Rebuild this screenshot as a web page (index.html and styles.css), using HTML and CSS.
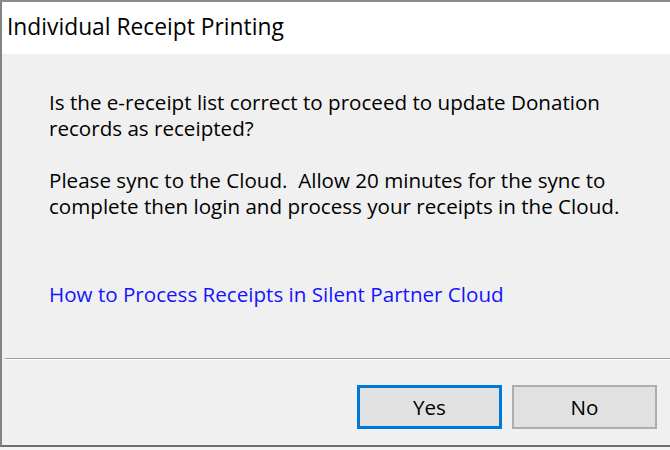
FILE: index.html
```html
<!DOCTYPE html>
<html>
<head>
<meta charset="utf-8">
<link rel="stylesheet" href="styles.css">
</head>
<body>
<div class="screen">
  <div class="dialog">
    <div class="titlebar">Individual Receipt Printing</div>
    <div class="content">
      <div class="message">
        <p>Is the e-receipt list correct to proceed to update Donation<br>records as receipted?</p>
        <p class="last">Please sync to the Cloud.&nbsp; Allow 20 minutes for the sync to<br>complete then login and process your receipts in the Cloud.</p>
        <a class="link" href="#">How to Process Receipts in Silent Partner Cloud</a>
      </div>
      <div class="separator"></div>
      <div class="footer">
        <button class="btn btn-default">Yes</button>
        <button class="btn">No</button>
      </div>
    </div>
  </div>
</div>
</body>
</html>
```
FILE: styles.css
```css
html, body {
  margin: 0;
  padding: 0;
}
body {
  width: 670px;
  height: 450px;
  overflow: hidden;
  background: #f4f4f4;
  font-family: "Open Sans", "Noto Sans", sans-serif;
  color: #000;
}
.screen {
  height: 450px;
  box-sizing: border-box;
  border-top: 2px solid #8c8c8c;
  background: #f4f4f4;
}
.dialog {
  height: 445px;
  box-sizing: border-box;
  border-left: 2px solid #848484;
  border-bottom: 2px solid #6e6e6e;
  display: flex;
  flex-direction: column;
  background: #f0f0f0;
}
.titlebar {
  height: 53px;
  box-sizing: border-box;
  background: #fff;
  padding: 0 0 3px 5px;
  display: flex;
  align-items: center;
  font-size: 22.8px;
  border-bottom: 1px solid #f0f0f0;
}
.content {
  flex: 1;
  display: flex;
  flex-direction: column;
}
.message {
  height: 303px;
  box-sizing: border-box;
  padding: 34px 0 0 47px;
  font-size: 20.6px;
  line-height: 26px;
}
.message p {
  margin: 0 0 26px 0;
}
.message p.last {
  margin-bottom: 0;
}
.link {
  display: block;
  margin-top: 62px;
  color: #1414ff;
  text-decoration: none;
}
.separator {
  height: 1px;
  margin-left: 3px;
  background: #a0a0a0;
  border-bottom: 1px solid #ffffff;
}
.footer {
  display: flex;
  justify-content: flex-end;
  gap: 10px;
  padding: 25px 13px 0 0;
}
.btn {
  width: 145px;
  height: 44px;
  box-sizing: border-box;
  background: #e1e1e1;
  border: 2px solid #adadad;
  font-family: "Open Sans", "Noto Sans", sans-serif;
  font-size: 20.6px;
  color: #000;
  padding: 0;
}
.btn-default {
  border: 3px solid #0078d7;
}
```
